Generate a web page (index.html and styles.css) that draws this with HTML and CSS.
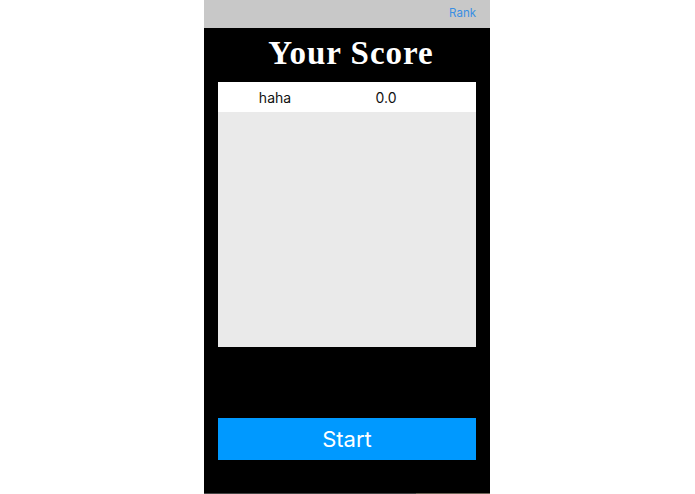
FILE: index.html
```html
<!DOCTYPE html>
<html lang="en">
<head>
    <meta charset="UTF-8">
    <meta name="viewport" content="width=device-width, initial-scale=1.0">
    <title>Your Score</title>
    <link rel="stylesheet" href="styles.css">
</head>
<body>
    <div class="phone">
        <header class="nav-bar">
            <a class="rank-link" href="#">Rank</a>
        </header>
        <main class="content">
            <h1 class="title">Your Score</h1>
            <div class="score-list">
                <div class="score-row">
                    <span class="score-name">haha</span>
                    <span class="score-value">0.0</span>
                </div>
            </div>
            <button class="start-button">Start</button>
        </main>
        <div class="bottom-edge"></div>
    </div>
</body>
</html>
```

FILE: styles.css
```css
body {
    margin: 0;
    background-color: #fff;
    font-family: Inter, "Liberation Sans", sans-serif;
}

.phone {
    width: 286px;
    height: 494px;
    margin-left: 204px;
    display: flex;
    flex-direction: column;
    overflow: hidden;
    background-color: #000;
}

.nav-bar {
    height: 26px;
    padding: 0 14px 2px 0;
    display: flex;
    justify-content: flex-end;
    align-items: center;
    background-color: #c8c8c8;
}

.rank-link {
    color: #3a8fe3;
    font-size: 11.5px;
    text-decoration: none;
}

.content {
    flex: 1;
    padding: 0 14px;
    display: flex;
    flex-direction: column;
}

.title {
    height: 54px;
    margin: 0;
    padding-left: 8px;
    color: #fff;
    font-family: "Liberation Serif", serif;
    font-size: 33px;
    font-weight: bold;
    line-height: 50px;
    letter-spacing: 1px;
    text-align: center;
}

.score-list {
    height: 265px;
    background-color: #eaeaea;
}

.score-row {
    height: 30px;
    display: flex;
    align-items: center;
    background-color: #fff;
    color: #111;
    font-size: 14px;
}

.score-name {
    width: 114px;
    text-align: center;
}

.score-value {
    width: 108px;
    text-align: center;
}

.start-button {
    height: 42px;
    margin-top: 71px;
    border: none;
    background-color: #0099ff;
    color: #fff;
    font-family: inherit;
    font-size: 22px;
}

.bottom-edge {
    height: 1px;
    background: linear-gradient(to right, #444 74%, #6b6355 74%);
}
```
